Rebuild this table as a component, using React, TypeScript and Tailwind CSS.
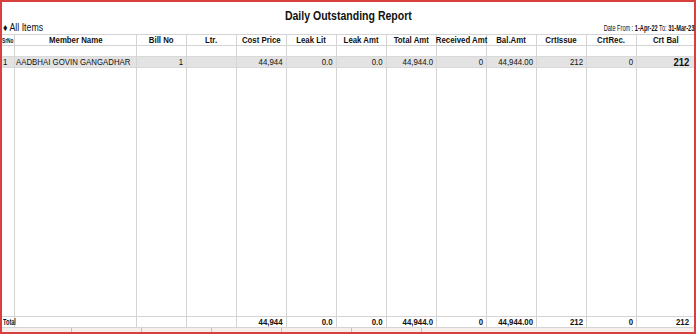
const cols =
  "grid grid-cols-[13px_122px_50px_50px_50px_50px_50px_50px_50px_50px_50px_50px_57px]";

const headers = [
  "SrNo",
  "Member Name",
  "Bill No",
  "Ltr.",
  "Cost Price",
  "Leak Lit",
  "Leak Amt",
  "Total Amt",
  "Received Amt",
  "Bal.Amt",
  "CrtIssue",
  "CrtRec.",
  "Crt Bal",
];

const row = ["1", "AADBHAI GOVIN GANGADHAR", "1", "", "44,944", "0.0", "0.0", "44,944.0", "0", "44,944.00", "212", "0", "212"];
const totals = ["Total", "", "", "", "44,944", "0.0", "0.0", "44,944.0", "0", "44,944.00", "212", "0", "212"];

const App = () => {
  return (
    <div
      className="w-[696px] h-[334px] bg-white border-2 border-b-0 border-[#d8403e] flex flex-col text-[#111]"
      style={{ fontFamily: '"Liberation Sans", Arial, sans-serif' }}
    >
      {/* Title */}
      <div className="h-[21px] pt-[7px] flex justify-center text-[13px] font-bold leading-[14px]">
        <span className="inline-block whitespace-nowrap scale-x-[0.81]">Daily Outstanding Report</span>
      </div>

      {/* Sub header */}
      <div className="h-[10px] flex items-end justify-between pl-[1px]">
        <span className="inline-block text-[10px] leading-[10px] origin-left scale-x-[0.88] whitespace-nowrap">
          ♦ All Items
        </span>
        <span className="inline-block text-[8.5px] leading-[9px] origin-right scale-x-[0.66] whitespace-nowrap">
          Date From : <b>1-Apr-22</b> To: <b>31-Mar-23</b>
        </span>
      </div>

      {/* Table */}
      <div className="flex-1 flex flex-col mt-[1px]">
        {/* Header row */}
        <div className={`${cols} h-[12px] border-t border-b border-[#d4d4d4]`}>
          {headers.map((h, i) => (
            <div
              key={i}
              className={`border-r border-[#d4d4d4] last:border-r-0 flex text-[9px] font-bold leading-[11px] whitespace-nowrap ${
                i === 0 ? "justify-start" : "justify-center"
              }`}
            >
              <span
                className={`inline-block ${
                  i === 0 ? "text-[8px] origin-left scale-x-[0.6]" : "scale-x-[0.87]"
                }`}
              >
                {h}
              </span>
            </div>
          ))}
        </div>

        {/* Blank row */}
        <div className={`${cols} h-[10px]`}>
          {headers.map((_, i) => (
            <div key={i} className="border-r border-[#d4d4d4] last:border-r-0" />
          ))}
        </div>

        {/* Data row */}
        <div className={`${cols} h-[12px] bg-[#e3e3e3] border-t border-b border-[#d9d9d9]`}>
          {row.map((v, i) => (
            <div
              key={i}
              className={`border-r border-[#d4d4d4] last:border-r-0 flex text-[9px] leading-[10px] whitespace-nowrap ${
                i < 2 ? "justify-start pl-[1px]" : "justify-end pr-[3px]"
              } ${i === 12 ? "text-[11px] font-bold pr-[5px]" : ""}`}
            >
              <span className={`inline-block ${i < 2 ? "origin-left" : "origin-right"} scale-x-[0.87]`}>{v}</span>
            </div>
          ))}
        </div>

        {/* Filler */}
        <div className={`${cols} flex-1`}>
          {headers.map((_, i) => (
            <div key={i} className="border-r border-[#d4d4d4] last:border-r-0" />
          ))}
        </div>

        {/* Total row */}
        <div className={`${cols} h-[11px] border-t border-[#d4d4d4]`}>
          {totals.map((v, i) => (
            <div
              key={i}
              className={`border-r border-[#d4d4d4] last:border-r-0 flex text-[9px] font-bold leading-[10px] whitespace-nowrap ${
                i === 0 ? "justify-start pl-[1px]" : "justify-end pr-[3px]"
              } ${i === 12 ? "pr-[5px]" : ""}`}
            >
              <span
                className={`inline-block ${
                  i === 0 ? "origin-left scale-x-[0.62]" : "origin-right scale-x-[0.87]"
                }`}
              >
                {v}
              </span>
            </div>
          ))}
        </div>

        {/* Bottom strip */}
        <div className="h-[5px] border-t border-[#d4d4d4] bg-[#f6eded] flex">
          <div className="w-[70px] border-r border-[#e2b5b5]" />
          <div className="w-[70px] border-r border-[#e2b5b5]" />
          <div className="w-[70px] border-r border-[#e2b5b5]" />
          <div className="w-[70px] border-r border-[#e2b5b5]" />
          <div className="w-[70px] border-r border-[#e2b5b5]" />
          <div className="w-[70px] border-r border-[#e2b5b5]" />
          <div className="flex-1" />
        </div>
        <div className="h-[2px] bg-[#d8403e]" />
      </div>
    </div>
  );
};

export default App;
